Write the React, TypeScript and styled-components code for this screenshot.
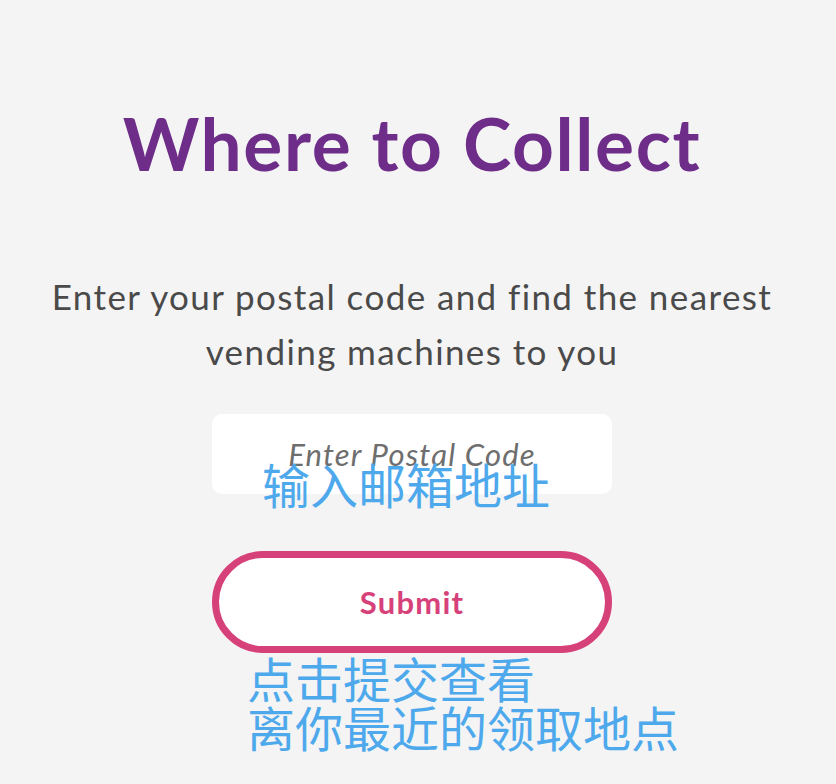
import styled, { createGlobalStyle } from "styled-components";

const GlobalStyle = createGlobalStyle`
  html, body {
    margin: 0;
    padding: 0;
    background: #f4f4f4;
  }
  body {
    font-family: Lato, "Noto Sans", sans-serif;
  }
`;

const Page = styled.main`
  min-height: 784px;
  display: flex;
  flex-direction: column;
  align-items: center;
  padding: 100px 12px 0 0;
  box-sizing: border-box;
`;

const Title = styled.h1`
  margin: 0;
  font-family: Lato, sans-serif;
  font-weight: 700;
  font-size: 73px;
  line-height: 86px;
  color: #6f2d8a;
  letter-spacing: 1.6px;
`;

const Intro = styled.p`
  margin: 83px 0 0;
  width: 780px;
  text-align: center;
  font-family: Lato, sans-serif;
  font-size: 35px;
  line-height: 55px;
  letter-spacing: 1.4px;
  color: #4a4a4a;
`;

const Field = styled.div`
  position: relative;
  margin-top: 35px;
  width: 400px;
`;

const Input = styled.input`
  width: 100%;
  height: 80px;
  box-sizing: border-box;
  border: none;
  border-radius: 10px;
  background: #ffffff;
  text-align: center;
  font-family: Lato, sans-serif;
  font-size: 31px;
  font-style: italic;
  letter-spacing: 1.2px;
  color: #4a4a4a;
  outline: none;

  &::placeholder {
    color: #6e6e6e;
    font-style: italic;
  }
`;

const Note = styled.span`
  font-family: "Noto Sans CJK SC", sans-serif;
  font-size: 48px;
  line-height: 49px;
  color: #4ea9ec;
  white-space: nowrap;
`;

const FieldNote = styled(Note)`
  position: absolute;
  left: 50px;
  top: 45px;
`;

const Submit = styled.button`
  margin-top: 57px;
  width: 400px;
  height: 102px;
  box-sizing: border-box;
  border: 7px solid #d7417a;
  border-radius: 51px;
  background: #ffffff;
  color: #d7417a;
  font-family: Lato, sans-serif;
  font-weight: 700;
  font-size: 31px;
  letter-spacing: 1.2px;
  cursor: pointer;
`;

const Hint = styled.div`
  width: 400px;
  display: flex;
  flex-direction: column;
  padding-left: 35px;
  box-sizing: border-box;
`;

export default function App() {
  return (
    <>
      <GlobalStyle />
      <Page>
        <Title>Where to Collect</Title>
        <Intro>
          Enter your postal code and find the nearest
          <br />
          vending machines to you
        </Intro>
        <Field>
          <Input placeholder="Enter Postal Code" />
          <FieldNote>输入邮箱地址</FieldNote>
        </Field>
        <Submit>Submit</Submit>
        <Hint>
          <Note>点击提交查看</Note>
          <Note>离你最近的领取地点</Note>
        </Hint>
      </Page>
    </>
  );
}
